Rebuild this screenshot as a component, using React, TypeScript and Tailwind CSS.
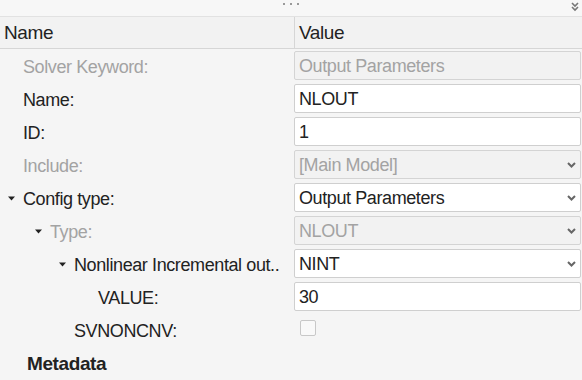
import React from "react";

const Tri = () => (
  <svg width="7" height="5" viewBox="0 0 7 5" className="shrink-0">
    <polygon points="0,0.5 7,0.5 3.5,4.5" fill="#222" />
  </svg>
);

const Chevron = () => (
  <svg width="9" height="6" viewBox="0 0 9 6" className="shrink-0">
    <polyline points="1,1 4.5,4.5 8,1" fill="none" stroke="#666" strokeWidth="2" />
  </svg>
);

type Row = {
  label: string;
  indent: number;
  tri?: boolean;
  disabled?: boolean;
  kind: "text" | "select" | "check" | "none";
  value?: string;
  valueDisabled?: boolean;
  bold?: boolean;
};

const rows: Row[] = [
  { label: "Solver Keyword:", indent: 23, disabled: true, kind: "text", value: "Output Parameters", valueDisabled: true },
  { label: "Name:", indent: 23, kind: "text", value: "NLOUT" },
  { label: "ID:", indent: 23, kind: "text", value: "1" },
  { label: "Include:", indent: 23, disabled: true, kind: "select", value: "[Main Model]", valueDisabled: true },
  { label: "Config type:", indent: 23, tri: true, kind: "select", value: "Output Parameters" },
  { label: "Type:", indent: 50, tri: true, disabled: true, kind: "select", value: "NLOUT", valueDisabled: true },
  { label: "Nonlinear Incremental out..", indent: 74, tri: true, kind: "select", value: "NINT" },
  { label: "VALUE:", indent: 98, kind: "text", value: "30" },
  { label: "SVNONCNV:", indent: 74, kind: "check" },
  { label: "Metadata", indent: 27, kind: "none", bold: true },
];

export default function App() {
  return (
    <div
      className="w-[582px] h-[380px] bg-[#f5f5f5] overflow-hidden text-[#222]"
      style={{ fontFamily: '"Liberation Sans", Arial, sans-serif' }}
    >
      <div className="h-[17px] border-b border-[#e2e2e2] bg-[#f7f7f7] relative flex items-start justify-center">
        <div className="flex gap-[5px] pt-[3px]">
          <span className="w-[2px] h-[2px] bg-[#9a9a9a]" />
          <span className="w-[2px] h-[2px] bg-[#9a9a9a]" />
          <span className="w-[2px] h-[2px] bg-[#9a9a9a]" />
        </div>
        <svg width="8" height="10" viewBox="0 0 8 10" className="absolute right-[3px] top-[2px]">
          <polyline points="1,1 4,4 7,1" fill="none" stroke="#777" strokeWidth="1.6" />
          <polyline points="1,5 4,8 7,5" fill="none" stroke="#777" strokeWidth="1.6" />
        </svg>
      </div>
      <div className="h-[32px] flex border-b border-[#d6d6d6] bg-[#f2f2f2] text-[19px] tracking-[-0.4px] text-[#222]">
        <div className="w-[295px] border-r border-[#d6d6d6] flex items-center pl-[4px] pt-[2px]">Name</div>
        <div className="flex-1 flex items-center pl-[4px] pt-[2px]">Value</div>
      </div>
      {rows.map((r, i) => (
        <div key={i} className="h-[33px] flex text-[18px] tracking-[-0.4px]">
          <div className="w-[294px] flex items-center pt-[3px] relative" style={{ paddingLeft: r.indent }}>
            {r.tri && (
              <span className="absolute top-[15px]" style={{ left: r.indent - 15 }}>
                <Tri />
              </span>
            )}
            <span
              className={
                (r.disabled ? "text-[#a3a3a3] " : "text-[#222] ") +
                (r.bold ? "font-bold text-[19px] text-[#111] " : "") +
                "whitespace-nowrap"
              }
            >
              {r.label}
            </span>
          </div>
          <div className="flex-1 pt-[2px] pr-[1px]">
            {(r.kind === "text" || r.kind === "select") && (
              <div
                className={
                  "h-[29px] border rounded-[2px] flex items-center pl-[4px] pr-[4px] " +
                  (r.valueDisabled
                    ? "bg-[#f2f2f2] border-[#d4d4d4] text-[#a3a3a3]"
                    : "bg-white border-[#cfcfcf] text-[#222]")
                }
              >
                <span className="flex-1 whitespace-nowrap pt-[1px]">{r.value}</span>
                {r.kind === "select" && <Chevron />}
              </div>
            )}
            {r.kind === "check" && (
              <div className="pl-[6px] pt-[5px]">
                <div className="w-[16px] h-[16px] border-[1.5px] border-[#c8c8c8] rounded-[2px] bg-[#f9f9f9]" />
              </div>
            )}
          </div>
        </div>
      ))}
    </div>
  );
}
